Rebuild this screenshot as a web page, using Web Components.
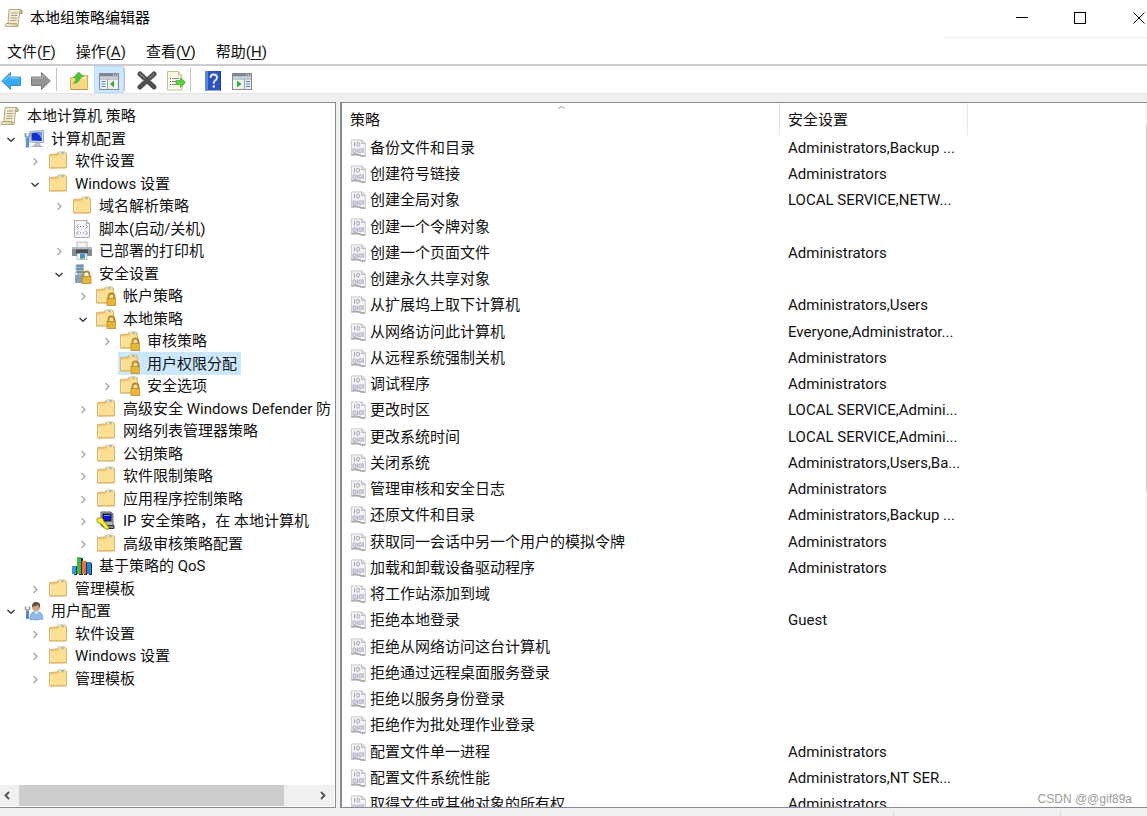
<!DOCTYPE html>
<html lang="zh-CN">
<head>
<meta charset="utf-8">
<title>本地组策略编辑器</title>
<style>
  html, body { height: 100%; margin: 0; }
  body {
    font: 15px/22px Roboto, "Noto Sans CJK SC", sans-serif;
    color: #111; background: #fff; overflow: hidden;
  }
</style>
</head>
<body>
<app-window>
  <title-bar slot="title">本地组策略编辑器</title-bar>
  <menu-bar slot="menu">
    <menu-entry key="F">文件</menu-entry>
    <menu-entry key="A">操作</menu-entry>
    <menu-entry key="V">查看</menu-entry>
    <menu-entry key="H">帮助</menu-entry>
  </menu-bar>
  <tool-bar slot="tools"></tool-bar>
  <policy-tree slot="tree">
    <tree-item depth="0" icon="scroll">本地计算机 策略</tree-item>
    <tree-item depth="1" icon="computer" state="open">计算机配置</tree-item>
    <tree-item depth="2" icon="folder" state="closed">软件设置</tree-item>
    <tree-item depth="2" icon="folder" state="open">Windows 设置</tree-item>
    <tree-item depth="3" icon="folder" state="closed">域名解析策略</tree-item>
    <tree-item depth="3" icon="script">脚本(启动/关机)</tree-item>
    <tree-item depth="3" icon="printer" state="closed">已部署的打印机</tree-item>
    <tree-item depth="3" icon="server" state="open">安全设置</tree-item>
    <tree-item depth="4" icon="locked" state="closed">帐户策略</tree-item>
    <tree-item depth="4" icon="locked" state="open">本地策略</tree-item>
    <tree-item depth="5" icon="locked" state="closed">审核策略</tree-item>
    <tree-item depth="5" icon="locked" selected>用户权限分配</tree-item>
    <tree-item depth="5" icon="locked" state="closed">安全选项</tree-item>
    <tree-item depth="4" icon="folder" state="closed">高级安全 Windows Defender 防</tree-item>
    <tree-item depth="4" icon="folder">网络列表管理器策略</tree-item>
    <tree-item depth="4" icon="folder" state="closed">公钥策略</tree-item>
    <tree-item depth="4" icon="folder" state="closed">软件限制策略</tree-item>
    <tree-item depth="4" icon="folder" state="closed">应用程序控制策略</tree-item>
    <tree-item depth="4" icon="ipsec" state="closed">IP 安全策略，在 本地计算机</tree-item>
    <tree-item depth="4" icon="folder" state="closed">高级审核策略配置</tree-item>
    <tree-item depth="3" icon="chart">基于策略的 QoS</tree-item>
    <tree-item depth="2" icon="folder" state="closed">管理模板</tree-item>
    <tree-item depth="1" icon="user" state="open">用户配置</tree-item>
    <tree-item depth="2" icon="folder" state="closed">软件设置</tree-item>
    <tree-item depth="2" icon="folder" state="closed">Windows 设置</tree-item>
    <tree-item depth="2" icon="folder" state="closed">管理模板</tree-item>
  </policy-tree>
  <policy-table slot="list"></policy-table>
  <span slot="mark">CSDN @@gif89a</span>
</app-window>

<script>
const FOLDER = `<path d="M1.500 3.500 9 3 10.500 1 17 1 18.500 2.500 18.500 16.500 1.500 17z" fill="#ecc878" stroke="#d8b566"/>
  <path d="M2 5.500 9.500 5 11 3.500 18 3.500v12.500L2 16.500z" fill="#fbdf95"/><path d="M2.500 6v10" stroke="#fdebb8"/>
  <path d="M11 2h6" stroke="#fff"/><path d="M13 2h3" stroke="#4aa2dc"/>
  <path d="M2 17h16.500" stroke="#d9b366"/>`;
const LOCK = `<path d="M11.500 13v-2.500a3 3 0 0 1 6 0v2.500" fill="none" stroke="#b5892e" stroke-width="1.800"/>
  <rect x="10" y="12.500" width="9" height="7" fill="#e0a92a" stroke="#b08428" stroke-width=".7"/>
  <path d="M10.500 14h8M10.500 16h8M10.500 18h8" stroke="#f2cf5f" stroke-width=".7"/>`;
const PANEL = `<rect x=".5" y="2.500" width="19" height="16" fill="#eef0f1" stroke="#858b94"/>
  <path d="M1 4h18" stroke="#7c8796" stroke-width="3"/><path d="M1 6.500h18" stroke="#cdd4dc"/><path d="M14 4h1M16 4h1M18 4h1" stroke="#fff"/>
  <path d="M1 8h18" stroke="#9aa1a9"/>`;
const ICONS = {
  scroll: `<path d="M5 1.500h11.500q2.500.5 1.500 4h-2.500L14 18.500H1.500q-1-2 .5-3h2z" fill="#f3ead0" stroke="#b5a987"/>
    <path d="M16.500 2q-1.500 1-1 3.500h2.500q1-3-1.500-3.500z" fill="#c9bb96" stroke="#9c8e6b" stroke-width=".6"/>
    <path d="M2 15.500h10.500l.5 3" fill="#d9c798" stroke="#b39d64" stroke-width=".8"/>
    <path d="M7 5h6.500M7 7.500h6.500M6.500 10h6.500M6 12.500h6.500" stroke="#aaa48e"/>`,
  computer: `<path d="M6 2.500 19.500 1.500v12L6 13z" fill="#d9e0e8" stroke="#9aa7b5"/>
    <path d="M7.500 4 18 3v9L7.500 11.500z" fill="#1631c9"/><path d="M12 3.500 18 3v9q-1-6-6-8.500z" fill="#6b9df2"/>
    <path d="M11 14h5l1 3H9z" fill="#b9c2cc"/><path d="M7 17.500h12" stroke="#a7afb9"/>
    <path d="M1.500 4v3l2 2 2-2V4" fill="none" stroke="#8ba0bb" stroke-width="2"/><path d="M3.500 9v9.500" stroke="#5f92cb" stroke-width="3.500"/>`,
  user: `<circle cx="12" cy="6" r="4" fill="#d2a37c"/><path d="M8 6q0-5.500 4.500-5 4.500 0 3.500 6l-2-3z" fill="#5d5148"/>
    <path d="M6 18.500q-.5-8 6-8 7 0 7 7.500-6 1.500-13 .5z" fill="#8fb9e2" stroke="#7fa9d8"/><path d="M10 10.500l2.500 3 2.500-3" fill="#e8f1fa"/>
    <path d="M1.500 5.500v2.500l2 1.500 2-1.500V5.500" fill="none" stroke="#8d99a8" stroke-width="1.500"/><path d="M3.500 10v8" stroke="#5c86c8" stroke-width="3"/>`,
  folder: FOLDER,
  locked: `<g transform="translate(-1 0)">${FOLDER}</g><g transform="translate(1 0)">${LOCK}</g>`,
  script: `<path d="M2.500 1.500h12l3 3v14h-15z" fill="#f5f6f8" stroke="#a9adb4"/><path d="M14.500 1.500v3h3" fill="#dde" stroke="#a9adb4"/>
    <path d="M6.500 5.500l-2 2 2 2M13.500 5.500l2 2-2 2M6.500 12l-2 2 2 2M13.500 12l2 2-2 2" fill="none" stroke="#8f8cba"/>
    <path d="M8 7.500h1M11 7.500h1M8 14h1M11 14h1" stroke="#6d69a9"/>`,
  printer: `<path d="M5 1h10v6H5z" fill="#f1f4f7" stroke="#a4a9af" stroke-width=".8"/><rect x="0" y="6" width="20" height="9" fill="#868b91"/>
    <path d="M0 7h20" stroke="#b8bdc3" stroke-width="2"/><path d="M4 8.500h12v4H4z" fill="#4a4f55"/><path d="M18 8.500h1" stroke="#73e36b"/>
    <path d="M5 12.500h10v6H5z" fill="#f7fafc" stroke="#9ca4ac" stroke-width=".7"/><rect x="8" y="13" width="5" height="4.500" fill="#3f95db"/><path d="M8 16h3v1.500H8z" fill="#49a75b"/>`,
  server: `<rect x="3" y="0" width="9" height="19" fill="#a8b9c8"/><path d="M3 0h2v19H3z" fill="#d9e3eb"/><path d="M4 2h7M4 5h7M4 8h7" stroke="#53697c"/>
    <path d="M4 3.500h7" stroke="#6acbd2"/><path d="M3 11h9v8H3z" fill="#88a0b6"/>${LOCK}`,
  ipsec: `<path d="M5 1h10l2 2v11l-2 2H7l-2-2z" fill="#b4b4b4" stroke="#5e5e5e"/><rect x="7" y="3" width="8" height="7" fill="#0b1ad0" stroke="#111"/>
    <path d="M8 4.500h6" stroke="#7d8fff"/><path d="M9 14.500h9v3h-8z" fill="#888" stroke="#333"/>
    <path d="M1 9.500q-1-2.500 2-2.500 2-1 4 1l1 2.500 5 6-1 2-3-1-4.500-5.500-2.500 0z" fill="#fff13b" stroke="#857b00" stroke-width=".8"/>`,
  chart: `<path d="M2 10h3v9H2zM7 2h4v17H7zM12 6h3v13h-3zM17 7h3v12h-3z" fill="#283238"/>
    <path d="M0 10h4v8H0z" fill="#2f9ce5"/><path d="M5 1h4v17H5z" fill="#49b541"/><path d="M10 5h4v13h-4z" fill="#ea6f4d"/><path d="M15 6h4v12h-4z" fill="#2384cf"/>`,
  policy: `<path d="M1.500 1h12l3.500 3.500v14q-3 1.500-5-.5H1.500z" fill="#f4f4f6" stroke="#c4c4c8"/><path d="M13 1v4h4" fill="#dcdce0" stroke="#b4b4ba"/>
    <path d="M1.500 17.500q5-1.500 8 0 4 2 7.500 1.500" fill="none" stroke="#a9a9ae" stroke-width="2"/>
    <path d="M5 3.500v4.500M8 10.500v5M14.500 10v5.500" stroke="#a19fb8" stroke-width="1.200"/>
    <g fill="none" stroke="#a19fb8" stroke-width="1.100"><ellipse cx="9" cy="5.800" rx="1.600" ry="2.300"/><ellipse cx="4.600" cy="13" rx="1.400" ry="2.300"/><ellipse cx="11.300" cy="13" rx="1.400" ry="2.300"/></g>`,
  back: `<path d="M.7 10 9.500 1.500V6H19.500v8.500H9.500v4z" fill="#35aaf0" stroke="#3a8fc9"/><path d="M2.500 10 9 4v3h9.500" fill="none" stroke="#86d4ff"/>`,
  forward: `<path d="M19.300 10 10.500 1.500V6H.5v8.500H10.500v4z" fill="#949494" stroke="#7d7d7d"/><path d="M1.500 7h10V4" fill="none" stroke="#bdbdbd"/>`,
  up: `<path d="M1.500 6.500h6l2-2h9v14h-17z" fill="#f8d780" stroke="#d5ae5c"/><path d="M2 18.500h16.500" stroke="#c4963f"/>
    <path d="M4.500 12.500q2.500-2 2.500-6H4.500L9.500 1 14.500 5.500 11.500 6q-.5 5.500-7 6.500z" fill="#4cc43c" stroke="#43a83a" stroke-width=".7"/><path d="M14 7h3" stroke="#fff"/>`,
  treepane: `${PANEL}<path d="M8.500 8v10" stroke="#9aa1a9"/><path d="M2.500 10.500h4M2.500 13h4M2.500 15.500h4" stroke="#4c88c2"/><path d="M15 9.500v7L11 13z" fill="#35ad2e"/>`,
  actionpane: `${PANEL}<path d="M12.500 8v10" stroke="#9aa1a9"/><path d="M14 10.500h4M14 13h4M14 15.500h4" stroke="#4c88c2"/><path d="M5 9.500v7L9.500 13z" fill="#35ad2e"/>`,
  remove: `<path d="M3 3 10 9.500M17 3 10 9.500M10 9.500 3 16M10 9.500 17 16" stroke="#4f4f4f" stroke-width="5" stroke-linecap="round"/>
    <path d="M3 3 7.500 7M17 3 12.500 7" stroke="#7d7d7d" stroke-width="1.500" stroke-linecap="round"/>`,
  export: `<path d="M1.500 .5h11l3.500 4v14.500H1.500z" fill="#fffbe4" stroke="#c4be9b"/><path d="M12.500 .5v4h3.500" fill="#e9e2bd" stroke="#c4be9b"/>
    <path d="M4 7.500h1M4 10.500h1M4 13.500h1" stroke="#444"/><path d="M6 7.500h7M6 10.500h5M6 13.500h5" stroke="#8685b6"/>
    <path d="M10 9.500h4.500V6.500L19.500 11.500 14.500 16.500V13.500H10z" fill="#5fce3e" stroke="#4aad39" stroke-width=".7"/>`,
  help: `<rect x="2" y="0" width="16" height="19.500" fill="#2c53bf"/><path d="M2 0h3v19.500H2z" fill="#5b83e0"/><path d="M17.500 0v19.500" stroke="#1c3c92"/>
    <path d="M7.500 7q0-3.500 3.200-3.500T14 6.500q0 1.800-1.700 2.800-1.500 1-1.500 3.500" fill="none" stroke="#f0f3fb" stroke-width="1.800"/><circle cx="10.800" cy="15.500" r="1.200" fill="#f0f3fb"/>`
};
const svg = name => `<svg viewBox="0 0 20 20" fill="none" aria-hidden="true">${ICONS[name]}</svg>`;

function define(tag, render) {
  customElements.define(tag, class extends HTMLElement {
    connectedCallback() {
      if (!this.shadowRoot) this.attachShadow({ mode: 'open' }).innerHTML = render(this);
    }
  });
}

define('gp-icon', el => `<style>
  :host { display: block; width: 20px; height: 20px; flex: none; }
  :host([small]) { width: 18px; height: 18px; }
  svg { display: block; width: 100%; height: 100%; }
</style>${svg(el.getAttribute('name'))}`);

define('app-window', () => `<style>
  :host { display: flex; flex-direction: column; height: 100vh; }
  main { flex: 1; min-height: 0; display: grid; grid-template-columns: 336px minmax(0, 1fr);
    grid-template-rows: minmax(0, 1fr); gap: 4px; background: #f0f0f0; padding-top: 8px; border-top: 1px solid #e3e3e3; }
  footer { height: 8px; flex: none; background: #f0f0f0; display: flex; justify-content: flex-end; }
  footer i { border-left: 1px solid #d9d9d9; width: 166px; margin-top: 3px; }
  footer i + i { width: 86px; }
  ::slotted([slot=mark]) { position: absolute; right: 15px; bottom: 8px; font: 12px/18px "Liberation Sans", sans-serif; color: #9a9a9a; }
</style>
<slot name="title"></slot><slot name="menu"></slot><slot name="tools"></slot>
<main><slot name="tree"></slot><slot name="list"></slot></main>
<footer><i></i><i></i></footer><slot name="mark"></slot>`);

define('title-bar', () => `<style>
  :host { display: flex; height: 38px; flex: none; color: #000; }
  gp-icon { margin: 8px 6px 0 4px; }
  h1 { font: inherit; line-height: 36px; margin: 0; flex: 1; }
  .controls { display: flex; width: 203px; box-sizing: border-box; justify-content: flex-end; border-bottom: 1px solid #ececec; }
  button { border: 0; background: none; padding: 0; width: 58px; height: 36px; display: grid; place-items: center; }
  button:last-child { width: 38px; justify-items: end; padding-right: 2px; }
  svg { width: 12px; height: 12px; display: block; }
</style>
<gp-icon name="scroll"></gp-icon><h1><slot></slot></h1>
<div class="controls">
  <button aria-label="最小化"><svg viewBox="0 0 12 12"><path d="M0 5.500h12" stroke="#000"/></svg></button>
  <button aria-label="最大化"><svg viewBox="0 0 12 12"><rect x=".5" y=".5" width="11" height="11" fill="none" stroke="#000"/></svg></button>
  <button aria-label="关闭"><svg viewBox="0 0 12 12"><path d="M.5.5l11 11M11.500.5l-11 11" stroke="#000"/></svg></button>
</div>`);

define('menu-bar', () => `<style>
  :host { display: flex; gap: 20px; height: 28px; flex: none; box-sizing: border-box; padding-left: 7px; border-bottom: 2px solid #cdcdd0; }
</style><slot></slot>`);

define('menu-entry', el => `<style>
  :host { display: block; }
  button { border: 0; background: none; padding: 0; font: inherit; line-height: 28px; color: inherit; white-space: nowrap; }
  u { text-underline-offset: 2px; }
</style><button><slot></slot>(<u>${el.getAttribute('key')}</u>)</button>`);

define('tool-bar', () => `<style>
  :host { display: flex; height: 27px; flex: none; margin-left: -4px; }
  button { border: 0; background: none; padding: 3px 0 0; width: 30px; display: grid; place-items: center; }
  button[aria-pressed] { background: #cce8ff; box-shadow: inset 0 0 0 1px #b5dcfa; }
  button[aria-pressed] ~ button { width: 29px; }
  i { width: 1px; background: #c4c4c4; margin: 2px 7px 2px 0; }
</style>
<button aria-label="后退"><gp-icon name="back"></gp-icon></button>
<button aria-label="前进"><gp-icon name="forward"></gp-icon></button><i></i>
<button aria-label="向上一级"><gp-icon name="up"></gp-icon></button>
<button aria-label="显示/隐藏控制台树" aria-pressed="true"><gp-icon name="treepane"></gp-icon></button><i></i>
<button aria-label="删除"><gp-icon name="remove"></gp-icon></button>
<button aria-label="导出列表"><gp-icon name="export"></gp-icon></button><i></i>
<button aria-label="帮助"><gp-icon name="help"></gp-icon></button>
<button aria-label="显示/隐藏操作窗格"><gp-icon name="actionpane"></gp-icon></button>`);

define('policy-tree', () => `<style>
  :host { display: flex; flex-direction: column; box-sizing: border-box; min-width: 0; background: #fff;
    border: 1px solid #868b95; border-width: 1px 1px 1px 0; }
  .items { flex: 1; overflow: hidden; padding-top: 2px; }
  ::slotted(tree-item) { height: 22px; }
  ::slotted(tree-item:nth-child(even)) { height: 23px; }
  .scroll { display: flex; height: 21px; background: #f0f0f0; flex: none; margin: 0 1px 1px 0; }
  button { width: 19px; border: 0; padding: 0 0 0 3px; background: none; }
  button:last-child { padding: 0; width: 24px; }
  svg { display: block; width: 9px; height: 9px; }
  .track { flex: 1; }
  .thumb { width: 91%; height: 100%; background: #cdcdcd; }
</style>
<div class="items" role="tree"><slot></slot></div>
<div class="scroll">
  <button aria-label="向左滚动"><svg viewBox="0 0 9 9"><path d="M6 1 2.500 4.500 6 8" fill="none" stroke="#505050" stroke-width="1.800"/></svg></button>
  <div class="track"><div class="thumb"></div></div>
  <button aria-label="向右滚动"><svg viewBox="0 0 9 9" style="margin:auto"><path d="M3 1l3.500 3.500L3 8" fill="none" stroke="#505050" stroke-width="1.800"/></svg></button>
</div>`);

define('tree-item', el => {
  const depth = +el.getAttribute('depth'), state = el.getAttribute('state');
  const arrow = state === 'open' ? '<path d="M1.500 4 5 7.300 8.500 4" stroke="#404040" stroke-width="1.500"/>'
    : '<path d="M3.500 2 7 5.500 3.500 9" stroke="#a6a6a6" stroke-width="1.300"/>';
  el.setAttribute('role', 'treeitem');
  return `<style>
  :host { display: flex; white-space: nowrap; padding-left: ${Math.max(0, depth - 1) * 24}px; }
  .toggle { box-sizing: border-box; width: 24px; flex: none; padding: 0 3px 0 0; border: 0; background: none; display: grid; place-items: center; }
  svg { width: 10px; height: 10px; display: block; }
  .label { display: flex; align-items: center; gap: 7px; padding: 0 4px 0 2px; margin-left: -2px; }
  :host([selected]) .label { background: #cce8ff; }
</style>
${depth === 0 ? '' : state ? `<button class="toggle" aria-label="${state === 'open' ? '折叠' : '展开'}"><svg viewBox="0 0 10 10" fill="none">${arrow}</svg></button>` : '<span class="toggle"></span>'}
<div class="label"><gp-icon name="${el.getAttribute('icon')}"></gp-icon><span><slot></slot></span></div>`;
});

const POLICIES = [
  ['备份文件和目录', 'Administrators,Backup ...'],
  ['创建符号链接', 'Administrators'],
  ['创建全局对象', 'LOCAL SERVICE,NETW...'],
  ['创建一个令牌对象', ''],
  ['创建一个页面文件', 'Administrators'],
  ['创建永久共享对象', ''],
  ['从扩展坞上取下计算机', 'Administrators,Users'],
  ['从网络访问此计算机', 'Everyone,Administrator...'],
  ['从远程系统强制关机', 'Administrators'],
  ['调试程序', 'Administrators'],
  ['更改时区', 'LOCAL SERVICE,Admini...'],
  ['更改系统时间', 'LOCAL SERVICE,Admini...'],
  ['关闭系统', 'Administrators,Users,Ba...'],
  ['管理审核和安全日志', 'Administrators'],
  ['还原文件和目录', 'Administrators,Backup ...'],
  ['获取同一会话中另一个用户的模拟令牌', 'Administrators'],
  ['加载和卸载设备驱动程序', 'Administrators'],
  ['将工作站添加到域', ''],
  ['拒绝本地登录', 'Guest'],
  ['拒绝从网络访问这台计算机', ''],
  ['拒绝通过远程桌面服务登录', ''],
  ['拒绝以服务身份登录', ''],
  ['拒绝作为批处理作业登录', ''],
  ['配置文件单一进程', 'Administrators'],
  ['配置文件系统性能', 'Administrators,NT SER...'],
  ['取得文件或其他对象的所有权', 'Administrators']
];

define('policy-table', () => `<style>
  :host { display: flex; position: relative; min-width: 0; overflow: hidden; background: #fff;
    border: 1px solid #868b95; border-width: 1px 0 1px 2px; }
  .view { flex: 1; min-width: 0; overflow: hidden; }
  table { width: 100%; table-layout: fixed; border-collapse: separate; border-spacing: 0; }
  th { font-weight: normal; text-align: left; line-height: 30px; padding: 2px 8px 0; border-right: 1px solid #e8e8e8; }
  th:last-child { border: 0; }
  td { padding: 0 8px; height: 26px; line-height: 26px; white-space: nowrap; }
  tr:nth-child(4n) td { height: 27px; }
  .name { display: flex; align-items: center; gap: 2px; }
  .caret { position: absolute; left: 216px; top: 2px; width: 7px; height: 5px; }
  .bar { width: 1px; flex: none; background: #f0f0f0; padding-top: 22px; }
  .bar i { display: block; height: 366px; background: #cdcdcd; }
</style>
<div class="view"><table>
  <colgroup><col style="width:438px"><col style="width:188px"><col></colgroup>
  <thead><tr><th>策略</th><th>安全设置</th><th></th></tr></thead>
  <tbody>${POLICIES.map(([name, value]) => `<tr><td><div class="name"><gp-icon small name="policy"></gp-icon>${name}</div></td><td>${value}</td><td></td></tr>`).join('')}</tbody>
</table></div>
<svg class="caret" viewBox="0 0 7 5"><path d="M.5 4l3-3 3 3" fill="none" stroke="#8a8a8a"/></svg>
<div class="bar"><i></i></div>`);
</script>
</body>
</html>
